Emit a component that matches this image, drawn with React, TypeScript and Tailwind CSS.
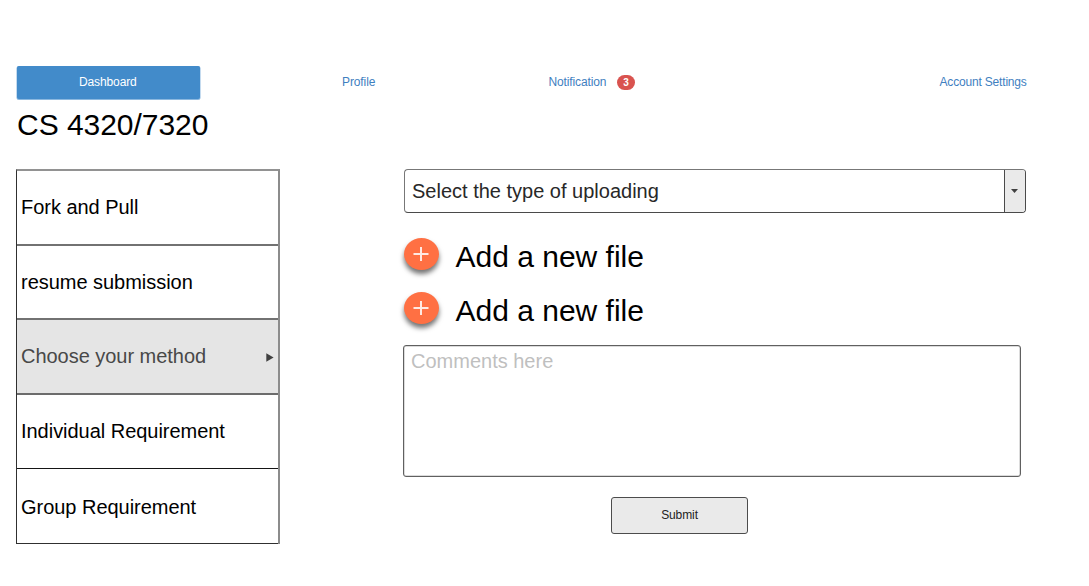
import React from "react";

type Assignment = {
  label: string;
  row: string;
  selected?: boolean;
};

const assignments: Assignment[] = [
  { label: "Fork and Pull", row: "h-[75px] pb-px border-b-2 border-b-[#727272]" },
  { label: "resume submission", row: "h-[74px] pb-px border-b-2 border-b-[#727272]" },
  { label: "Choose your method", row: "h-[75px] pb-px border-b-2 border-b-[#6c6c6c]", selected: true },
  { label: "Individual Requirement", row: "h-[74px] pb-px border-b border-b-[#151515]" },
  { label: "Group Requirement", row: "h-[75px] pt-[2px] border-b border-b-[#303030]" },
];

function NavBar() {
  return (
    <nav className="flex h-[33px] text-xs leading-[32px] text-[#3f80bf]">
      <a className="w-[183px] rounded-[2px] bg-[#428bca] pl-[62px] tracking-[-0.12px] text-white shadow-[0_0.5px_0_0.5px_#8bb8df]">
        Dashboard
      </a>
      <a className="ml-[142px] w-[206px] tracking-[-0.1px]">Profile</a>
      <a className="flex w-[391px] items-start">
        <span className="w-[69px] pl-[0.5px] tracking-[-0.12px]">Notification</span>
        <span className="mt-[9px] flex h-[15px] w-[18px] items-center justify-center rounded-[8px] bg-[#d9534f] text-[10px] leading-none font-bold text-white">
          3
        </span>
      </a>
      <a className="whitespace-nowrap pl-[0.5px] tracking-[-0.18px]">Account Settings</a>
    </nav>
  );
}

function AssignmentList() {
  return (
    <ul className="w-[264px] border-t-2 border-r-2 border-l border-t-[#929292] border-r-[#8c8c8c] border-l-[#303030]">
      {assignments.map(({ label, row, selected }) => (
        <li
          key={label}
          className={`flex items-center justify-between pr-[4px] pl-[4px] text-xl ${row} ${
            selected ? "bg-[#e5e5e5] text-[#484848]" : "text-black"
          }`}
        >
          <span className="tracking-[-0.03px]">{label}</span>
          {selected && (
            <svg className="mt-[3px] h-[9px] w-[8px]" viewBox="0 0 8 9" fill="#404040">
              <path d="M.3.3 7.6 4.5.3 8.7Z" />
            </svg>
          )}
        </li>
      ))}
    </ul>
  );
}

function AddFileRow() {
  return (
    <div className="flex h-[54px] items-start">
      <span className="flex h-[32px] w-[35px] items-center justify-center rounded-[50%] bg-[#ff7043] pr-px shadow-[0_4px_5px_rgba(0,0,0,0.55)]">
        <svg className="h-4 w-4" viewBox="0 0 16 16" stroke="#ffe9e2" strokeWidth="2">
          <path d="M0.5 8H15.5M8 1V15" />
        </svg>
      </span>
      <span className="ml-[16.5px] text-[30px] leading-[37px]">Add a new file</span>
    </div>
  );
}

function UploadForm() {
  return (
    <section className="ml-[124px] w-[622px]">
      <div className="flex h-[44px] overflow-hidden rounded-[4px] border border-[#4a4a4a] border-t-[#777777] border-l-[#777777]">
        <div className="flex-1 pl-[7px] text-xl leading-[42px] text-[#282828]">Select the type of uploading</div>
        <div className="flex w-[21px] items-center justify-center border-l border-[#4a4a4a] bg-[#eaeaea] pr-px">
          <svg className="h-[4px] w-[7px]" viewBox="0 0 7 4" fill="#404040">
            <path d="M0 0h7L3.5 4Z" />
          </svg>
        </div>
      </div>
      <div className="mt-[25px]">
        <AddFileRow />
        <AddFileRow />
      </div>
      <div className="-mt-px -ml-px h-[132px] w-[618px] rounded-[3px] border border-[#606060] pt-px pl-[7px] text-xl text-[#bfbfbf] shadow-[inset_0_0_0_0.5px_#b8b8b8]">
        Comments here
      </div>
      <div className="mt-[20px] ml-[207px] flex h-[37px] w-[137px] items-center justify-center rounded-[3px] border border-[#4c4c4c] bg-[#eaeaea] pb-px text-xs tracking-[-0.1px] text-[#222222]">
        Submit
      </div>
    </section>
  );
}

export default function App() {
  return (
    <main className="h-[586px] w-[1089px] overflow-hidden bg-white pt-[66px] font-['Liberation_Sans',Arial,sans-serif] text-black">
      <div className="pl-[17px]">
        <NavBar />
        <h1 className="h-[70px] pt-[8px] text-[30px] leading-[36px] tracking-[-0.04px]">CS 4320/7320</h1>
      </div>
      <div className="flex items-start pl-[16px]">
        <AssignmentList />
        <UploadForm />
      </div>
    </main>
  );
}
